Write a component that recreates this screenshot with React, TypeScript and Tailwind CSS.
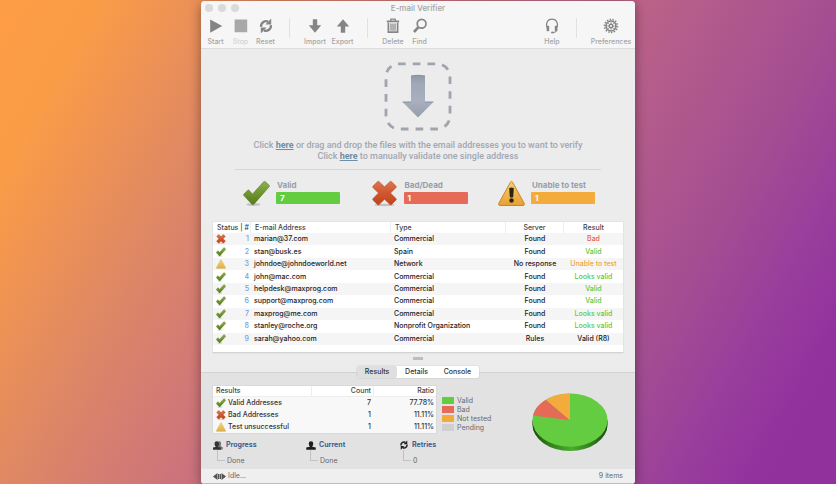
import React, { useId, useState } from 'react';

type Status = 'valid' | 'bad' | 'warn';

function CheckMark({ className }: { className: string }) {
  const id = useId();
  return (
    <svg viewBox="0 0 26 26" className={className} aria-hidden="true">
      <defs>
        <linearGradient id={id} x1="0" y1="0" x2="0" y2="1">
          <stop offset="0" stopColor="#8fae52" />
          <stop offset="0.5" stopColor="#6f9630" />
          <stop offset="1" stopColor="#557a1c" />
        </linearGradient>
      </defs>
      <ellipse cx="10" cy="23.6" rx="7" ry="1.4" fill="#000" opacity="0.18" />
      <path
        d="M0.8 13.6 4.6 9.8Q5.2 9.2 5.8 9.8L9.2 13.4 19.8 1.8Q20.8 1 21.6 1.6L25.2 5Q25.9 5.6 25.3 6.4L10.8 23Q9.4 24.4 8.2 23L0.8 15Q0.2 14.4 0.8 13.6Z"
        fill={`url(#${id})`}
        stroke="#5a7d25"
        strokeWidth="0.5"
      />
    </svg>
  );
}

function CrossMark({ className }: { className: string }) {
  const id = useId();
  return (
    <svg viewBox="0 0 26 26" className={className} aria-hidden="true">
      <defs>
        <linearGradient id={id} x1="0" y1="0" x2="0" y2="1">
          <stop offset="0" stopColor="#dc7650" />
          <stop offset="0.5" stopColor="#cf5730" />
          <stop offset="1" stopColor="#c24317" />
        </linearGradient>
      </defs>
      <ellipse cx="13" cy="24" rx="10" ry="1.2" fill="#000" opacity="0.18" />
      <path
        d="M6.2 1.6Q7 0.8 7.800 1.6L13 6.600 18.200 1.600Q19 0.800 19.800 1.600L24 5.800Q24.800 6.600 24 7.400L18.800 12.600 24 17.800Q24.800 18.600 24 19.400L19.800 23.600Q19 24.400 18.200 23.600L13 18.600 7.800 23.600Q7 24.400 6.200 23.600L2 19.400Q1.200 18.600 2 17.800L7.200 12.600 2 7.400Q1.200 6.600 2 5.800Z"
        fill={`url(#${id})`}
        stroke="#b5441f"
        strokeWidth="0.5"
      />
    </svg>
  );
}

function WarningSign({ className, small }: { className: string; small?: boolean }) {
  const id = useId();
  return (
    <svg viewBox="0 0 27 26" className={className} aria-hidden="true">
      <defs>
        <linearGradient id={id} x1="0" y1="0" x2="0" y2="1">
          <stop offset="0" stopColor={small ? '#edd68c' : '#f8cf72'} />
          <stop offset="1" stopColor={small ? '#e0b040' : '#e9a02c'} />
        </linearGradient>
      </defs>
      <path
        d="M12.5 1.6Q13.5 0.2 14.5 1.6L26.2 22.8Q26.8 25 25 25H2Q0.2 25 0.8 22.8Z"
        fill={`url(#${id})`}
        stroke={small ? '#dcb65c' : '#b9822c'}
        strokeWidth="0.9"
      />
      {!small && (
        <g fill="#2a2416">
          <path d="M11.2 7.8Q13.5 6.4 15.8 7.8L15.2 16.4Q13.5 17.6 11.8 16.4Z" />
          <circle cx="13.5" cy="20" r="2.2" />
        </g>
      )}
    </svg>
  );
}

function StatusIcon({ status }: { status: Status }) {
  if (status === 'valid') return <CheckMark className="block size-[10px]" />;
  if (status === 'bad') return <CrossMark className="block size-[10px]" />;
  return <WarningSign small className="block size-[10px]" />;
}

function Cycle({ className }: { className: string }) {
  return (
    <svg viewBox="0 0 16 16" className={className} aria-hidden="true">
      <g fill="none" stroke="currentColor" strokeWidth="2.3">
        <path d="M3.1 8.8A5 5 0 0 1 10 3.6" />
        <path d="M12.9 7.2A5 5 0 0 1 6 12.400" />
      </g>
      <path d="M13.2 0.6V6.6H7.400Z" fill="currentColor" />
      <path d="M2.8 15.4V9.4H8.600Z" fill="currentColor" />
    </svg>
  );
}

const glyph = 'block size-4';

const PlayIcon = (
  <svg viewBox="0 0 16 16" className={glyph}><path d="M2.2 1.4 14.2 8 2.2 14.8Z" fill="currentColor" /></svg>
);
const StopIcon = (
  <svg viewBox="0 0 16 16" className={glyph}><path d="M1.6 1.6H14.200V14.200H1.600Z" fill="currentColor" /></svg>
);
const ImportIcon = (
  <svg viewBox="0 0 16 16" className={glyph}><path d="M5.800 1.200h4.400v6h4L8 14.800 1.800 7.200h4Z" fill="currentColor" /></svg>
);
const ExportIcon = (
  <svg viewBox="0 0 16 16" className={glyph}><path d="M5.800 14.800h4.400V8.600h4L8 1.200 1.800 8.600h4Z" fill="currentColor" /></svg>
);
const TrashIcon = (
  <svg viewBox="0 0 16 16" className={glyph} fill="none" stroke="currentColor">
    <path d="M1.800 3.400H14.200" strokeWidth="1.900" />
    <path d="M5.800 3V1.200h4.400v1.800" strokeWidth="1.300" />
    <path d="M3.400 4.600V14.200h9.200V4.600" strokeWidth="1.700" />
    <path d="M6 5.400v7.400M8 5.400v7.400M10 5.400v7.400" strokeWidth="1.200" />
  </svg>
);
const FindIcon = (
  <svg viewBox="0 0 16 16" className={glyph} fill="none" stroke="currentColor">
    <circle cx="9.6" cy="5.8" r="4.400" strokeWidth="1.700" />
    <path d="M6.200 9.400 2 14" strokeWidth="2.600" />
  </svg>
);
const HelpIcon = (
  <svg viewBox="0 0 16 16" className={glyph} fill="none" stroke="currentColor">
    <path d="M2.800 9.400C1.600 4.400 4 1.200 8 1.200S14.400 4.400 13.200 9.400" strokeWidth="1.200" />
    <path d="M13 12Q12.600 14.400 9 14.600" strokeWidth="1" />
    <rect x="2.600" y="7.800" width="2.600" height="5.400" rx="0.800" fill="currentColor" stroke="none" />
    <rect x="10.800" y="7.800" width="2.600" height="5.400" rx="0.800" fill="currentColor" stroke="none" />
    <ellipse cx="8.400" cy="14.500" rx="1.400" ry="0.900" fill="currentColor" stroke="none" />
  </svg>
);
const GearIcon = (
  <svg viewBox="0 0 16 16" className={glyph} fill="none" stroke="currentColor">
    <circle cx="8" cy="8" r="6.500" strokeWidth="1.600" pathLength={28} strokeDasharray="1 1" />
    <circle cx="8" cy="8" r="5" strokeWidth="1.600" />
    <circle cx="8" cy="8" r="1.800" strokeWidth="1.400" />
    <path d="M8 3.400v3M8 9.600v3M3.400 8h3M9.600 8h3M4.700 4.700l2 2M9.300 9.300l2 2M4.700 11.300l2-2M9.300 6.700l2-2" strokeWidth="0.700" />
  </svg>
);

function Tool({ label, icon, width, disabled }: { label: string; icon: React.ReactNode; width: string; disabled?: boolean }) {
  return (
    <button type="button" disabled={disabled} className={`flex flex-col items-center gap-[3px] ${width}`}>
      <span className={disabled ? 'text-[#a8a8a8]' : 'text-[#858585]'}>{icon}</span>
      <span className={`text-[7px] leading-[10px] font-medium ${disabled ? 'text-[#d3d3d3]' : 'text-[#a5a5a5]'}`}>{label}</span>
    </button>
  );
}

function Stat({ label, value, bar, icon }: { label: string; value: number; bar: string; icon: React.ReactNode }) {
  return (
    <div className="flex items-start gap-[6px]">
      {icon}
      <div>
        <div className="pl-px text-[8px] leading-[10px] font-bold text-[#969eab]">{label}</div>
        <div className={`mt-[2px] h-3 w-16 rounded-[1px] pl-1 text-[8px] leading-3 font-bold text-white ${bar}`}>{value}</div>
      </div>
    </div>
  );
}

type Row = { status: Status; email: string; type: string; server: string; result: string; tone: string };

const green = 'text-[#5cc93e]';
const rows: Row[] = [
  { status: 'bad', email: 'marian@37.com', type: 'Commercial', server: 'Found', result: 'Bad', tone: 'text-[#e8604f]' },
  { status: 'valid', email: 'stan@busk.es', type: 'Spain', server: 'Found', result: 'Valid', tone: green },
  { status: 'warn', email: 'johndoe@johndoeworld.net', type: 'Network', server: 'No response', result: 'Unable to test', tone: 'text-[#f0a63a]' },
  { status: 'valid', email: 'john@mac.com', type: 'Commercial', server: 'Found', result: 'Looks valid', tone: green },
  { status: 'valid', email: 'helpdesk@maxprog.com', type: 'Commercial', server: 'Found', result: 'Valid', tone: green },
  { status: 'valid', email: 'support@maxprog.com', type: 'Commercial', server: 'Found', result: 'Valid', tone: green },
  { status: 'valid', email: 'maxprog@me.com', type: 'Commercial', server: 'Found', result: 'Looks valid', tone: green },
  { status: 'valid', email: 'stanley@roche.org', type: 'Nonprofit Organization', server: 'Found', result: 'Looks valid', tone: green },
  { status: 'valid', email: 'sarah@yahoo.com', type: 'Commercial', server: 'Rules', result: 'Valid (R8)', tone: 'text-[#222]' },
];

const summary: { status: Status; label: string; count: number; ratio: string }[] = [
  { status: 'valid', label: 'Valid Addresses', count: 7, ratio: '77.78%' },
  { status: 'bad', label: 'Bad Addresses', count: 1, ratio: '11.11%' },
  { status: 'warn', label: 'Test unsuccessful', count: 1, ratio: '11.11%' },
];

const legend = [
  { label: 'Valid', color: 'bg-[#63cc40]' },
  { label: 'Bad', color: 'bg-[#e66a58]' },
  { label: 'Not tested', color: 'bg-[#f3ab3c]' },
  { label: 'Pending', color: 'bg-[#d0d0d0]' },
];

const headLine = 'border-r border-[#eeeeee]';

function AddressTable() {
  return (
    <div className="mx-3 mt-[15px] border-b border-[#d4d4d4] bg-white pb-[7px] shadow-[0_0_0_1px_#e4e4e4]">
      <table className="h-[123px] w-full table-fixed border-separate border-spacing-0 text-[7px] leading-[10px] font-medium text-[#222]">
        <colgroup>
          <col className="w-[38px]" />
          <col className="w-[140px]" />
          <col />
          <col className="w-[58px]" />
          <col className="w-[59px]" />
        </colgroup>
        <thead>
          <tr className="h-[11px] text-left text-[#444]">
            <th className={`h-[11px] p-0 pr-px text-right font-medium whitespace-nowrap ${headLine}`}>Status | #</th>
            <th className={`p-0 pl-1 font-medium ${headLine}`}>E-mail Address</th>
            <th className={`p-0 pl-1 font-medium ${headLine}`}>Type</th>
            <th className={`p-0 text-center font-medium ${headLine}`}>Server</th>
            <th className="p-0 text-center font-medium">Result</th>
          </tr>
        </thead>
        <tbody>
          {rows.map((r, i) => (
            <tr key={r.email} className="odd:bg-[#f5f5f5]">
              <td className="p-0">
                <div className="flex items-center justify-between pr-[2px] pl-[3px]">
                  <StatusIcon status={r.status} />
                  <span className="text-[#6ea2e6]">{i + 1}</span>
                </div>
              </td>
              <td className="p-0 pl-[3px]">{r.email}</td>
              <td className="p-0 pl-[3px]">{r.type}</td>
              <td className="p-0 text-center whitespace-nowrap">{r.server}</td>
              <td className={`p-0 text-center whitespace-nowrap ${r.tone}`}>{r.result}</td>
            </tr>
          ))}
        </tbody>
      </table>
    </div>
  );
}

function SummaryTable() {
  return (
    <table className="w-[223px] table-fixed border-separate border-spacing-0 bg-[#f8f8f8] text-[7px] leading-[10px] font-medium text-[#333] shadow-[0_0_0_1px_#dadada]">
      <colgroup>
        <col className="w-[99px]" />
        <col className="w-[62px]" />
        <col className="w-[62px]" />
      </colgroup>
      <thead>
        <tr className="h-[11px] bg-white text-[#444]">
          <th className={`border-b p-0 pl-[3px] text-left font-medium ${headLine}`}>Results</th>
          <th className={`border-b p-0 pr-[2px] text-right font-medium ${headLine}`}>Count</th>
          <th className="border-b border-[#eeeeee] p-0 pr-[2px] text-right font-medium">Ratio</th>
        </tr>
      </thead>
      <tbody>
        {summary.map((s) => (
          <tr key={s.label} className="h-3">
            <td className="p-0">
              <div className="flex items-center gap-[2px] pl-[3px]">
                <StatusIcon status={s.status} />
                {s.label}
              </div>
            </td>
            <td className="p-0 pr-[3px] text-right">{s.count}</td>
            <td className="p-0 pr-[2px] text-right">{s.ratio}</td>
          </tr>
        ))}
      </tbody>
    </table>
  );
}

function Pie() {
  return (
    <svg viewBox="0 0 76 59" className="h-[59px] w-[76px]" role="img" aria-label="Share of results">
      <defs>
        <linearGradient id="pie-rim" x1="0" y1="0" x2="1" y2="0">
          <stop offset="0" stopColor="#1c4a10" />
          <stop offset="0.2" stopColor="#2f7a1c" />
          <stop offset="0.52" stopColor="#4bab2e" />
          <stop offset="0.8" stopColor="#2f7a1c" />
          <stop offset="1" stopColor="#1c4a10" />
        </linearGradient>
      </defs>
      <path d="M0.4 27.2V31.4A37.6 26.6 0 0 0 75.6 31.4V27.2Z" fill="url(#pie-rim)" />
      <ellipse cx="38" cy="27.2" rx="37.6" ry="26.6" fill="#63cc40" />
      <path d="M38 27.2 1 22.6A37.6 26.6 0 0 1 13.8 6.8Z" fill="#e66a58" />
      <path d="M38 27.2 13.8 6.8A37.6 26.6 0 0 1 38 0.6Z" fill="#f3ab3c" />
    </svg>
  );
}

const People = (
  <svg viewBox="0 0 20 18" className="h-[9px] w-[10px]">
    <path d="M10 1.5Q14-1 16 3 16.500 8 15 10L19.500 12.500V17H9Z" fill="#777" />
    <path d="M3 5Q3 0.500 7.500 0.500T12 5Q12 9 10 10.500V12L15.500 13V17.500H0V13L5 12V10.500Q3 9 3 5Z" fill="#333" />
  </svg>
);
const Person = (
  <svg viewBox="0 0 20 18" className="h-[9px] w-[10px]">
    <path d="M5.500 5Q5.500 0.300 10 0.300T14.500 5Q14.500 9 12.500 10.500V11.500L19.500 13V17.700H0.500V13L7.500 11.500V10.500Q5.500 9 5.500 5Z" fill="#1d1d1d" />
  </svg>
);

function Tracker({ title, value, icon }: { title: string; value: string; icon: React.ReactNode }) {
  return (
    <div className="w-[93px] text-[7px] leading-[10px]">
      <div className="flex items-center gap-[3px] font-bold text-[#3b5f92]">
        {icon}
        {title}
      </div>
      <div className="ml-1 flex gap-[2px] text-[#666]">
        <span className="h-[11px] w-2 border-b border-l border-[#c2c2c2]" />
        <span className="pt-[6px]">{value}</span>
      </div>
    </div>
  );
}

const tabs = ['Results', 'Details', 'Console'];

export default function App() {
  const [active, setActive] = useState('Results');
  return (
    <div className="min-h-screen bg-[linear-gradient(119deg,#fe9d45_0%,#fa9c47_9%,#dc8568_27%,#c86f80_43%,#bd6487_57%,#a44e92_76%,#983c9d_86%,#92339d_92%,#91329c_100%)] pt-px pb-px font-['Inter','Liberation_Sans',sans-serif]">
      <main className="mx-auto w-full max-w-[434px] overflow-hidden rounded-[4px] bg-[#ececec] shadow-[0_2px_12px_rgba(0,0,0,0.4)]">
        <header className="border-b border-[#dcdcdc] bg-[#f6f6f6]">
          <div className="flex h-[13px] items-center pr-1 pl-1">
            <div className="flex flex-1 gap-[5px]">
              <button type="button" aria-label="Close" className="size-2 rounded-full bg-[#dadada]" />
              <button type="button" aria-label="Minimize" className="size-2 rounded-full bg-[#dadada]" />
              <button type="button" aria-label="Zoom" className="size-2 rounded-full bg-[#dadada]" />
            </div>
            <h1 className="text-[8px] leading-[10px] font-medium text-[#a3a3a3]">E-mail Verifier</h1>
            <div className="flex-1" />
          </div>
          <nav aria-label="Toolbar" className="flex h-[34px] items-start pt-1 pr-1 pl-[2px]">
            <Tool label="Start" icon={PlayIcon} width="w-[25px]" />
            <Tool label="Stop" icon={StopIcon} width="w-[25px]" disabled />
            <Tool label="Reset" icon={<Cycle className={glyph} />} width="w-[25px]" />
            <span className="mx-[11px] h-5 w-px bg-[#e2e2e2]" />
            <Tool label="Import" icon={ImportIcon} width="w-[28px]" />
            <Tool label="Export" icon={ExportIcon} width="w-[27px]" />
            <span className="mx-[11px] h-5 w-px bg-[#e2e2e2]" />
            <Tool label="Delete" icon={TrashIcon} width="w-[28px]" />
            <Tool label="Find" icon={FindIcon} width="w-[25px]" />
            <span className="flex-1" />
            <Tool label="Help" icon={HelpIcon} width="w-5" />
            <span className="mx-[14px] h-5 w-px bg-[#e2e2e2]" />
            <Tool label="Preferences" icon={GearIcon} width="w-[40px]" />
          </nav>
        </header>

        <section className="flex flex-col items-center pt-[13px]">
          <svg viewBox="0 0 68 69" className="h-[69px] w-[68px]" aria-hidden="true">
            <defs>
              <linearGradient id="drop-arrow" x1="0" y1="0" x2="0" y2="1">
                <stop offset="0" stopColor="#929aaa" />
                <stop offset="0.2" stopColor="#a0a8b7" />
                <stop offset="0.6" stopColor="#a9b1c0" />
                <stop offset="1" stopColor="#959eae" />
              </linearGradient>
            </defs>
            <path
              d="M14 1.8H53A13 13 0 0 1 66 14.8V54A13 13 0 0 1 53 67H15A13 13 0 0 1 2 54V14.8A13 13 0 0 1 14 1.8"
              pathLength={16}
              fill="none"
              stroke="#a0a4ac"
              strokeWidth="2.8"
              strokeDasharray="0.52 0.48"
            />
            <path d="M27 14Q34 12.6 41 14V40H49.4L34 55.4 18.6 40H27Z" fill="url(#drop-arrow)" />
            <path d="M27 14Q34 12.6 41 14M18.6 40H27M41 40H49.4" fill="none" stroke="#808898" strokeWidth="0.9" />
          </svg>
          <div className="mt-[9px] text-center font-['Roboto','Liberation_Sans',sans-serif] text-[9px] leading-[11px] font-medium text-[#a0a7b3]">
            <p>
              Click <a href="#drop" className="font-bold text-[#6d8fa8] underline">here</a> or drag and drop the files with the email addresses you to want to verify
            </p>
            <p>
              Click <a href="#single" className="font-bold text-[#6d8fa8] underline">here</a> to manually validate one single address
            </p>
          </div>
        </section>

        <hr className="mx-[34px] mt-[7px] border-[#d6d6d6]" />

        <section className="mt-[10px] flex justify-between pr-10 pl-[42px]">
          <Stat label="Valid" value={7} bar="bg-[#63cc40]" icon={<CheckMark className="size-[27px]" />} />
          <Stat label="Bad/Dead" value={1} bar="bg-[#e66a58]" icon={<CrossMark className="size-[27px]" />} />
          <Stat label="Unable to test" value={1} bar="bg-[#f3ab3c]" icon={<WarningSign className="size-[27px]" />} />
        </section>

        <AddressTable />

        <div className="mx-auto mt-1 h-[3px] w-[10px] bg-[#bdbdbd]" />

        <div role="tablist" className="relative mx-auto mt-[6px] -mb-[6px] flex h-3 w-[122px] rounded-[2px] bg-white shadow-[0_0_1px_rgba(0,0,0,0.45)]">
          {tabs.map((t) => (
            <button
              key={t}
              type="button"
              role="tab"
              aria-selected={t === active}
              onClick={() => setActive(t)}
              className={`flex-auto rounded-[2px] text-[7px] leading-3 font-medium text-[#333] ${t === active ? 'bg-[#dfdfdf]' : 'bg-white'}`}
            >
              {t}
            </button>
          ))}
        </div>

        <section className="border-t border-[#d2d2d2] bg-[#e2e2e2] px-3 pt-[13px] pb-[3px]">
          <div className="flex">
            <SummaryTable />
            <ul className="mt-[10px] ml-[6px] text-[7px] leading-[9px] text-[#6a6a6a]">
              {legend.map((l) => (
                <li key={l.label} className="flex items-center gap-[3px]">
                  <span className={`h-[7px] w-3 ${l.color}`} />
                  {l.label}
                </li>
              ))}
            </ul>
            <div className="mt-[7px] mr-[15px] -mb-5 ml-auto">
              <Pie />
            </div>
          </div>
          <div className="mt-[7px] flex">
            <Tracker title="Progress" value="Done" icon={People} />
            <Tracker title="Current" value="Done" icon={Person} />
            <Tracker title="Retries" value="0" icon={<Cycle className="size-[10px] text-[#1d1d1d]" />} />
          </div>
        </section>

        <footer className="flex h-[15px] items-center gap-[2px] border-b border-[#bdbdbd] bg-[#efefef] px-3 text-[7px] leading-[10px] text-[#6a6a6a]">
          <svg viewBox="0 0 26 14" className="h-[7px] w-[13px]" aria-hidden="true">
            <path d="M0 7 9 0V14ZM10 2h2.5v10H10ZM13.5 2H16v10h-2.5ZM26 7 17 0V14Z" fill="#555" />
          </svg>
          Idle...
          <span className="ml-auto">9 items</span>
        </footer>
      </main>
    </div>
  );
}
